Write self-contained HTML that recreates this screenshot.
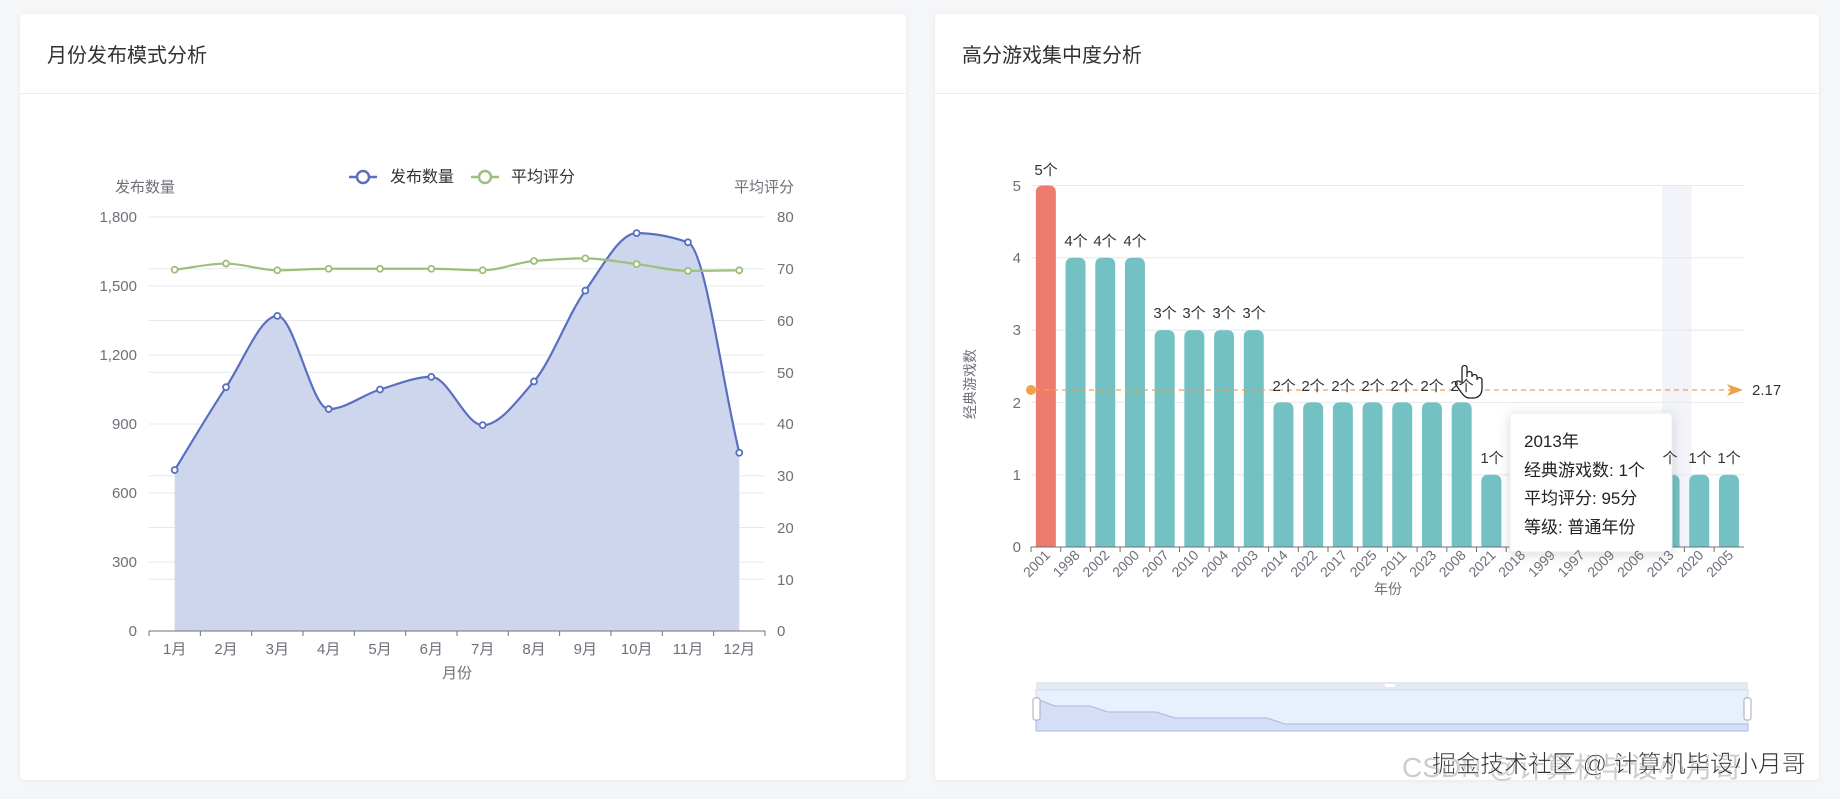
<!DOCTYPE html>
<html><head><meta charset="utf-8">
<style>
body{margin:0;width:1840px;height:799px;background:#f5f6f8;font-family:"Liberation Sans","Noto Sans CJK SC",sans-serif;overflow:hidden;position:relative}
.card{position:absolute;top:14px;height:766px;background:#fff;border-radius:4px;box-shadow:0 1px 6px rgba(0,0,0,0.06)}
.hd{height:80px;border-bottom:1px solid #ebeef5;box-sizing:border-box;padding:0 0 0 27px;font-size:20px;line-height:84px;color:#303133}
svg{position:absolute;left:0;top:0}
svg text{font-family:"Liberation Sans","Noto Sans CJK SC",sans-serif}
</style></head><body>
<div class="card" style="left:20px;width:886px"><div class="hd">月份发布模式分析</div></div>
<div class="card" style="left:935px;width:884px"><div class="hd">高分游戏集中度分析</div></div>
<svg width="1840" height="799" xmlns="http://www.w3.org/2000/svg">
<g stroke="#e6e8ee" stroke-width="1">
<line x1="149" x2="765" y1="217" y2="217"/><line x1="149" x2="765" y1="286" y2="286"/><line x1="149" x2="765" y1="355" y2="355"/><line x1="149" x2="765" y1="424" y2="424"/><line x1="149" x2="765" y1="493" y2="493"/><line x1="149" x2="765" y1="562" y2="562"/>
<line x1="149" x2="765" y1="268.75" y2="268.75"/><line x1="149" x2="765" y1="320.5" y2="320.5"/><line x1="149" x2="765" y1="372.25" y2="372.25"/><line x1="149" x2="765" y1="475.75" y2="475.75"/><line x1="149" x2="765" y1="527.5" y2="527.5"/><line x1="149" x2="765" y1="579.25" y2="579.25"/>
</g>
<path id="area" fill="#cdd6ec" stroke="none"/>
<path id="cl" fill="none" stroke="#5a6fc0" stroke-width="2.2"/>
<path id="rl" fill="none" stroke="#9cc07a" stroke-width="2.2"/>
<g id="pts"></g>
<line x1="149" x2="765" y1="631" y2="631" stroke="#6e7079"/>
<g stroke="#6e7079" id="ticks"></g>
<g font-size="15" fill="#6e7079" text-anchor="end">
<text x="137" y="222">1,800</text><text x="137" y="291">1,500</text><text x="137" y="360">1,200</text><text x="137" y="429">900</text><text x="137" y="498">600</text><text x="137" y="567">300</text><text x="137" y="636">0</text>
</g>
<g font-size="15" fill="#6e7079">
<text x="777" y="222">80</text><text x="777" y="274">70</text><text x="777" y="326">60</text><text x="777" y="378">50</text><text x="777" y="429">40</text><text x="777" y="481">30</text><text x="777" y="533">20</text><text x="777" y="585">10</text><text x="777" y="636">0</text>
<text x="115" y="192">发布数量</text><text x="734" y="192">平均评分</text>
</g>
<g font-size="15" fill="#6e7079" text-anchor="middle">
<text x="174.7" y="654">1月</text><text x="226" y="654">2月</text><text x="277.3" y="654">3月</text><text x="328.7" y="654">4月</text><text x="380" y="654">5月</text><text x="431.3" y="654">6月</text><text x="482.7" y="654">7月</text><text x="534" y="654">8月</text><text x="585.3" y="654">9月</text><text x="636.7" y="654">10月</text><text x="688" y="654">11月</text><text x="739.3" y="654">12月</text>
<text x="457" y="678">月份</text>
</g>
<g>
<line x1="349" x2="377" y1="177" y2="177" stroke="#5a6fc0" stroke-width="2.5"/><circle cx="363" cy="177" r="6" fill="#fff" stroke="#5a6fc0" stroke-width="2.5"/>
<text x="390" y="182" font-size="16" fill="#333">发布数量</text>
<line x1="471" x2="499" y1="177" y2="177" stroke="#9cc07a" stroke-width="2.5"/><circle cx="485" cy="177" r="6" fill="#fff" stroke="#9cc07a" stroke-width="2.5"/>
<text x="511" y="182" font-size="16" fill="#333">平均评分</text>
</g>

<!-- right chart -->
<rect x="1662" y="185" width="29.7" height="362" fill="#f2f4fa"/>
<g stroke="#e6e8ee"><line x1="1031" x2="1744" y1="185.5" y2="185.5"/><line x1="1031" x2="1744" y1="257.8" y2="257.8"/><line x1="1031" x2="1744" y1="330.1" y2="330.1"/><line x1="1031" x2="1744" y1="402.4" y2="402.4"/><line x1="1031" x2="1744" y1="474.7" y2="474.7"/></g>
<g id="bars"></g>
<line x1="1031" x2="1744" y1="547" y2="547" stroke="#6e7079"/>
<g font-size="15" fill="#6e7079" text-anchor="end">
<text x="1021" y="191">5</text><text x="1021" y="263">4</text><text x="1021" y="335">3</text><text x="1021" y="408">2</text><text x="1021" y="480">1</text><text x="1021" y="552">0</text>
</g>
<text transform="translate(975,384) rotate(-90)" font-size="14" fill="#6e7079" text-anchor="middle">经典游戏数</text>
<text x="1388" y="594" font-size="14" fill="#6e7079" text-anchor="middle">年份</text>
<line x1="1035" x2="1735" y1="390" y2="390" stroke="#f0a04b" stroke-width="1.2" stroke-dasharray="5,4"/>
<circle cx="1031" cy="390" r="5" fill="#f0a04b"/>
<path d="M1727 384 L1743 390 L1727 396 L1731 390 Z" fill="#f0a04b"/>
<text x="1752" y="395" font-size="15" fill="#333">2.17</text>
<!-- tooltip -->
<rect x="1510" y="413" width="162" height="139" rx="4" fill="#fff" stroke="#eee" style="filter:drop-shadow(0 2px 6px rgba(0,0,0,0.15))"/>
<g font-size="17" fill="#222"><text x="1524" y="447">2013年</text><text x="1524" y="476">经典游戏数: 1个</text><text x="1524" y="504">平均评分: 95分</text><text x="1524" y="533">等级: 普通年份</text></g>
<!-- hand cursor -->
<path d="M1462 382 v-14 a2.5 2.5 0 0 1 5 0 v9 v-3 a2.5 2.5 0 0 1 5 0 v3 a2.5 2.5 0 0 1 5 0 v3 a2.5 2.5 0 0 1 5 0 v8 q0 9 -8 10 h-5 q-4 0 -8 -6 l-5 -7 a2.5 2.5 0 0 1 4 -3 z" fill="#fff" stroke="#222" stroke-width="1.3"/>
<!-- datazoom -->
<rect x="1036" y="682" width="712" height="8" fill="#e3e8f4"/>
<rect x="1036" y="690" width="712" height="41" fill="#e8effd" stroke="#d2dbee"/>
<path d="M1036 699 L1055 706 L1090 706 L1108 712 L1156 712 L1175 718 L1267 718 L1285 724 L1748 724 L1748 731 L1036 731 Z" fill="#d5def5" stroke="#a9b8de" stroke-width="1"/>
<rect x="1033" y="698" width="7" height="22" rx="2" fill="#fff" stroke="#aab"/>
<rect x="1744" y="698" width="7" height="22" rx="2" fill="#fff" stroke="#aab"/>
<rect x="1385" y="684" width="10" height="3" fill="#fff"/>
<!-- watermark -->
<text x="1402" y="777" font-size="28" fill="#ccc">CSDN @计算机毕设小月哥</text>
<text x="1432" y="772" font-size="24" fill="#333" stroke="#fff" stroke-width="0.6">掘金技术社区 @ 计算机毕设小月哥</text>
</svg>
<script>
var ns="http://www.w3.org/2000/svg";
var xs=[],cnt=[700,1060,1370,965,1050,1105,895,1085,1480,1730,1690,775],rt=[69.8,71,69.7,70,70,70,69.7,71.5,72,70.9,69.6,69.7];
for(var i=0;i<12;i++)xs.push(149+51.33*(i+0.5));
function pts(v,f){return v.map(function(a,i){return [xs[i],f(a)]})}
var P1=pts(cnt,function(v){return 631-v/1800*414}),P2=pts(rt,function(v){return 631-v/80*414});
function smooth(P){var n=P.length,h=P[1][0]-P[0][0],d=[],m=[];
for(var i=0;i<n-1;i++)d.push((P[i+1][1]-P[i][1])/h);
m[0]=d[0];m[n-1]=d[n-2];
for(var i=1;i<n-1;i++){if(d[i-1]*d[i]<=0)m[i]=0;else m[i]=2/(1/d[i-1]+1/d[i]);}
var s="M"+P[0][0]+" "+P[0][1];
for(var i=0;i<n-1;i++){s+=" C"+(P[i][0]+h/3)+" "+(P[i][1]+m[i]*h/3)+" "+(P[i+1][0]-h/3)+" "+(P[i+1][1]-m[i+1]*h/3)+" "+P[i+1][0]+" "+P[i+1][1];}
return s}
var d1=smooth(P1);
document.getElementById("cl").setAttribute("d",d1);
document.getElementById("area").setAttribute("d",d1+" L"+xs[11]+" 631 L"+xs[0]+" 631 Z");
document.getElementById("rl").setAttribute("d",smooth(P2));
var g=document.getElementById("pts");
function c(x,y,col){var e=document.createElementNS(ns,"circle");e.setAttribute("cx",x);e.setAttribute("cy",y);e.setAttribute("r",3);e.setAttribute("fill","#fff");e.setAttribute("stroke",col);e.setAttribute("stroke-width",1.8);g.appendChild(e)}
P1.forEach(function(p){c(p[0],p[1],"#5a6fc0")});P2.forEach(function(p){c(p[0],p[1],"#9cc07a")});
var tk=document.getElementById("ticks");
for(var i=0;i<=12;i++){var l=document.createElementNS(ns,"line");var x=149+51.33*i;l.setAttribute("x1",x);l.setAttribute("x2",x);l.setAttribute("y1",631);l.setAttribute("y2",636);tk.appendChild(l)}
var vals=[5,4,4,4,3,3,3,3,2,2,2,2,2,2,2,1,1,1,1,1,1,1,1,1];
var bg=document.getElementById("bars");
for(var i=0;i<24;i++){var cx=1031+29.7*(i+0.5),h=vals[i]*72.3;
var p=document.createElementNS(ns,"path");var x0=cx-10,x1=cx+10,y0=547-h,r=7;
p.setAttribute("d","M"+x0+" 547 V"+(y0+r)+" Q"+x0+" "+y0+" "+(x0+r)+" "+y0+" H"+(x1-r)+" Q"+x1+" "+y0+" "+x1+" "+(y0+r)+" V547 Z");
p.setAttribute("fill",i==0?"#ee7b6b":"#73c1c3");bg.appendChild(p);
var l=document.createElementNS(ns,"line");var tx=1031+29.7*i;l.setAttribute("x1",tx);l.setAttribute("x2",tx);l.setAttribute("y1",547);l.setAttribute("y2",552);l.setAttribute("stroke","#6e7079");bg.appendChild(l);}
</script>
<svg width="1840" height="799" xmlns="http://www.w3.org/2000/svg" style="position:absolute;left:0;top:0;pointer-events:none">
<g font-size="14" fill="#6e7079" text-anchor="end" font-family="Liberation Sans,sans-serif">
<text transform="translate(1051,556) rotate(-45)">2001</text><text transform="translate(1080.7,556) rotate(-45)">1998</text><text transform="translate(1110.4,556) rotate(-45)">2002</text><text transform="translate(1140.1,556) rotate(-45)">2000</text><text transform="translate(1169.8,556) rotate(-45)">2007</text><text transform="translate(1199.5,556) rotate(-45)">2010</text><text transform="translate(1229.2,556) rotate(-45)">2004</text><text transform="translate(1258.9,556) rotate(-45)">2003</text><text transform="translate(1288.6,556) rotate(-45)">2014</text><text transform="translate(1318.3,556) rotate(-45)">2022</text><text transform="translate(1348,556) rotate(-45)">2017</text><text transform="translate(1377.7,556) rotate(-45)">2025</text><text transform="translate(1407.4,556) rotate(-45)">2011</text><text transform="translate(1437.1,556) rotate(-45)">2023</text><text transform="translate(1466.8,556) rotate(-45)">2008</text><text transform="translate(1496.5,556) rotate(-45)">2021</text><text transform="translate(1526.2,556) rotate(-45)">2018</text><text transform="translate(1555.9,556) rotate(-45)">1999</text><text transform="translate(1585.6,556) rotate(-45)">1997</text><text transform="translate(1615.3,556) rotate(-45)">2009</text><text transform="translate(1645,556) rotate(-45)">2006</text><text transform="translate(1674.7,556) rotate(-45)">2013</text><text transform="translate(1704.4,556) rotate(-45)">2020</text><text transform="translate(1734.1,556) rotate(-45)">2005</text>
</g>
<g font-size="15" fill="#333" text-anchor="middle" font-family="Liberation Sans,Noto Sans CJK SC,sans-serif">
<text x="1046" y="175">5个</text>
<text x="1076" y="246">4个</text><text x="1105" y="246">4个</text><text x="1135" y="246">4个</text>
<text x="1165" y="318">3个</text><text x="1194" y="318">3个</text><text x="1224" y="318">3个</text><text x="1254" y="318">3个</text>
<text x="1284" y="391">2个</text><text x="1313" y="391">2个</text><text x="1343" y="391">2个</text><text x="1373" y="391">2个</text><text x="1402" y="391">2个</text><text x="1432" y="391">2个</text><text x="1462" y="391">2个</text>
<text x="1492" y="463">1个</text><text x="1670" y="463">个</text><text x="1700" y="463">1个</text><text x="1729" y="463">1个</text>
</g>
</svg>
</body></html>
